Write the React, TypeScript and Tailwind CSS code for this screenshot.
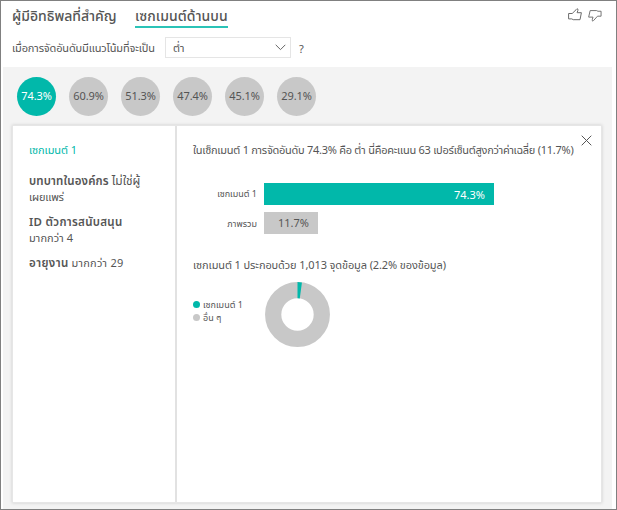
import React from 'react';

const segments = [
  { value: '74.3%', active: true },
  { value: '60.9%', active: false },
  { value: '51.3%', active: false },
  { value: '47.4%', active: false },
  { value: '45.1%', active: false },
  { value: '29.1%', active: false },
];

function ThumbUp() {
  return (
    <svg width="14" height="13" viewBox="0 0 14 13" fill="none" stroke="#6b6b6b" strokeWidth="1">
      <path d="M.6 5.5H4.2L8.2 1.6Q8.9.3 9.9 1.1Q10.2 2.2 9.1 4.7H13.4L12 11.7H5.2L3.8 10.9H.6Z" />
    </svg>
  );
}

function ThumbDown() {
  return (
    <svg className="mt-[2px]" width="14" height="14" viewBox="0 0 15 14" fill="none" stroke="#6b6b6b" strokeWidth="1">
      <path d="M14 7.2H10.2L6.2 11.6Q5.3 13.2 4.6 12.1Q4.3 10.8 5.4 8.2H.7L2.3 1.2H9.3L10.6 1.9H14Z" />
    </svg>
  );
}

function Donut() {
  return (
    <svg className="mt-px" width="65" height="65" viewBox="0 0 66 66">
      <circle cx="33" cy="33" r="24.7" fill="none" stroke="#c8c8c8" strokeWidth="16.5" />
      <path d="M33 .1A32.9 32.9 0 0 1 37.5 .4L35.3 16.7A16.3 16.3 0 0 0 33 16.6Z" fill="#01b8aa" />
    </svg>
  );
}

export default function App() {
  return (
    <div className="flex h-[510px] w-[617px] flex-col overflow-hidden whitespace-nowrap border border-[#808080] bg-white font-['Noto_Sans','Noto_Sans_Thai',sans-serif] text-[#555555]">
      <header className="flex h-[27px] shrink-0 items-stretch pl-[11px] pr-[14px]">
        <div className="flex w-[123px] items-center pt-[2px] text-[14px] font-medium">
          <span>ผู้มีอิทธิพลที่สำคัญ</span>
        </div>
        <div className="flex w-[93px] items-center border-b-2 border-[#2bc3b7] pt-[4px] text-[14px] font-medium tracking-[0.08px]">
          <span>เซกเมนต์ด้านบน</span>
        </div>
        <div className="ml-auto flex items-center gap-[6px]">
          <ThumbUp />
          <ThumbDown />
        </div>
      </header>
      <div className="flex h-[39px] shrink-0 items-center pl-[11px] text-[11px]">
        <span className="w-[153px] pt-[2px] tracking-[-0.15px]">เมื่อการจัดอันดับมีแนวโน้มที่จะเป็น</span>
        <div className="flex h-[21px] w-[126px] items-center justify-between border border-[#e5e5e5] pl-[7px] pr-1">
          <span className="pt-[2px]">ต่ำ</span>
          <svg width="11" height="7" viewBox="0 0 11 7" fill="none" stroke="#666">
            <path d="M.7 .8L5.5 5.6L10.3 .8" />
          </svg>
        </div>
        <span className="ml-[8px] pt-[3px] text-[11px]">?</span>
      </div>
      <main className="ml-[2px] mr-[4px] flex min-h-0 flex-1 flex-col bg-[#f3f3f3] pl-[9px] pr-[10px]">
        <div className="flex h-[58px] shrink-0 items-center gap-[13px] pl-[5px]">
          {segments.map((s) => (
            <div
              key={s.value}
              className={`flex size-[39px] items-center justify-center rounded-full text-[11px] tracking-[-0.1px] ${s.active ? 'bg-[#01b8aa] text-white' : 'bg-[#c8c8c8]'}`}
            >
              {s.value}
            </div>
          ))}
        </div>
        <div className="flex h-[378px] border border-[#e6e6e6] bg-white shadow-[0_0_3px_#cccccc]">
          <aside className="w-[164px] shrink-0 border-r-2 border-[#e2e2e2] pl-4 pt-4 text-[11px] leading-4">
            <p className="tracking-[-0.1px] text-[#01b8aa]">เซกเมนต์ 1</p>
            <p className="mt-[15px]"><span className="text-[11.5px] font-semibold tracking-[0.15px]">บทบาทในองค์กร</span> <span className="text-[12px]">ไม่ใช่ผู้</span><br /><span className="tracking-[-0.2px]">เผยแพร่</span></p>
            <p className="mt-[9px]"><span className="text-[11.5px] font-semibold tracking-[0.3px]">ID ตัวการสนับสนุน</span><br /><span className="tracking-[0.1px]">มากกว่า 4</span></p>
            <p className="mt-[9px]"><span className="text-[11.5px] font-semibold tracking-[0.4px]">อายุงาน</span> <span className="tracking-[0.25px]">มากกว่า 29</span></p>
          </aside>
          <section className="flex min-w-0 flex-1 flex-col pl-4 text-[11px]">
            <div className="flex h-[57px] shrink-0">
              <p className="w-[388px] shrink-0 pt-4 leading-4 tracking-[-0.265px]">ในเซ็กเมนต์ 1 การจัดอันดับ 74.3% คือ ต่ำ นี่คือคะแนน 63 เปอร์เซ็นต์สูงกว่าค่าเฉลี่ย (11.7%)</p>
              <svg className="mt-[9px] shrink-0" width="11" height="11" viewBox="0 0 11 11" stroke="#555">
                <path d="M.7 .7L10.3 10.3M10.3 .7L.7 10.3" />
              </svg>
            </div>
            <div className="flex h-[22px] shrink-0 items-center">
              <span className="w-[64px] text-right text-[9px]">เซกเมนต์ 1</span>
              <div className="ml-[7px] flex h-[22px] w-[230px] items-center justify-end bg-[#01b8aa] pr-[9px] pt-[2px] text-white">74.3%</div>
            </div>
            <div className="mt-[7px] flex h-[22px] shrink-0 items-center">
              <span className="w-[64px] pt-px text-right text-[9px]">ภาพรวม</span>
              <div className="ml-[7px] flex h-[22px] w-[54px] items-center justify-end bg-[#c8c8c8] pr-[9px]">11.7%</div>
            </div>
            <p className="mt-[23px] leading-4 tracking-[-0.11px]">เซกเมนต์ 1 ประกอบด้วย 1,013 จุดข้อมูล (2.2% ของข้อมูล)</p>
            <div className="mt-[8px] flex">
              <div className="flex w-[72px] flex-col pt-[17px] text-[9px] leading-[13px]">
                <div className="flex items-center gap-[3px]"><i className="size-[7px] rounded-full bg-[#01b8aa]" /><span>เซกเมนต์ 1</span></div>
                <div className="flex items-center gap-[3px]"><i className="size-[7px] rounded-full bg-[#c8c8c8]" /><span>อื่น ๆ</span></div>
              </div>
              <Donut />
            </div>
          </section>
        </div>
      </main>
    </div>
  );
}
